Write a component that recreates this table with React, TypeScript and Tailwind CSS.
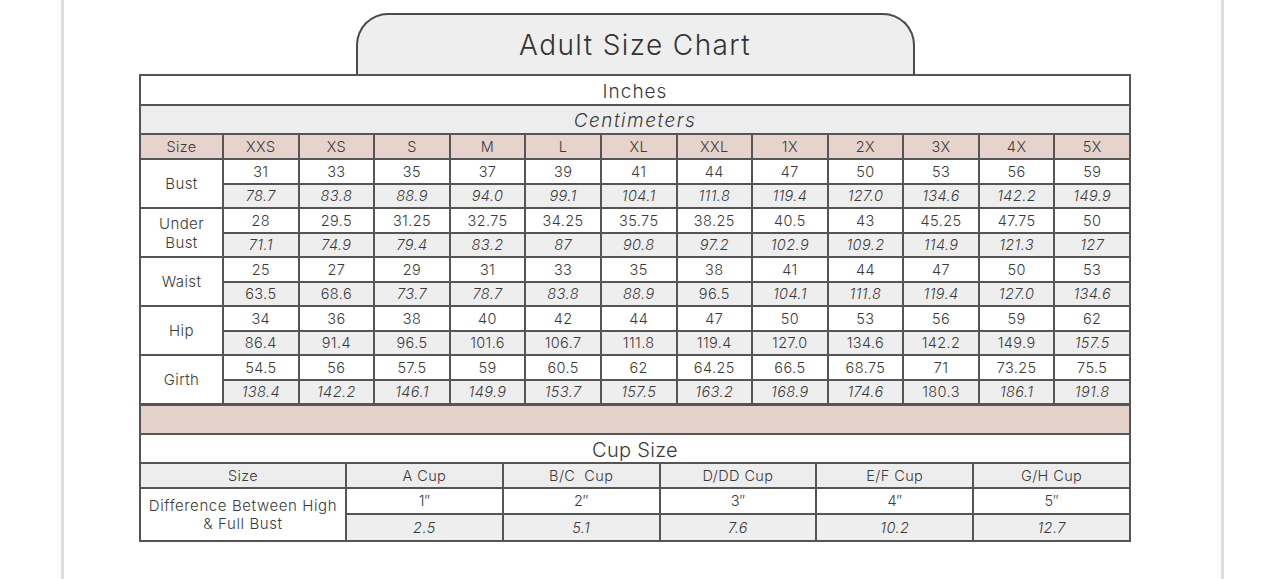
import React from "react";

const sizes = ["XXS", "XS", "S", "M", "L", "XL", "XXL", "1X", "2X", "3X", "4X", "5X"];

type Row = {
  label: string[];
  inches: string[];
  cm: string[];
  italic: number[];
};

const rows: Row[] = [
  {
    label: ["Bust"],
    inches: ["31", "33", "35", "37", "39", "41", "44", "47", "50", "53", "56", "59"],
    cm: ["78.7", "83.8", "88.9", "94.0", "99.1", "104.1", "111.8", "119.4", "127.0", "134.6", "142.2", "149.9"],
    italic: [1, 1, 1, 1, 1, 1, 1, 1, 1, 1, 1, 1],
  },
  {
    label: ["Under", "Bust"],
    inches: ["28", "29.5", "31.25", "32.75", "34.25", "35.75", "38.25", "40.5", "43", "45.25", "47.75", "50"],
    cm: ["71.1", "74.9", "79.4", "83.2", "87", "90.8", "97.2", "102.9", "109.2", "114.9", "121.3", "127"],
    italic: [1, 1, 1, 1, 1, 1, 1, 1, 1, 1, 1, 1],
  },
  {
    label: ["Waist"],
    inches: ["25", "27", "29", "31", "33", "35", "38", "41", "44", "47", "50", "53"],
    cm: ["63.5", "68.6", "73.7", "78.7", "83.8", "88.9", "96.5", "104.1", "111.8", "119.4", "127.0", "134.6"],
    italic: [0, 0, 1, 1, 1, 1, 0, 1, 1, 1, 1, 1],
  },
  {
    label: ["Hip"],
    inches: ["34", "36", "38", "40", "42", "44", "47", "50", "53", "56", "59", "62"],
    cm: ["86.4", "91.4", "96.5", "101.6", "106.7", "111.8", "119.4", "127.0", "134.6", "142.2", "149.9", "157.5"],
    italic: [0, 0, 0, 0, 0, 0, 0, 0, 0, 0, 0, 1],
  },
  {
    label: ["Girth"],
    inches: ["54.5", "56", "57.5", "59", "60.5", "62", "64.25", "66.5", "68.75", "71", "73.25", "75.5"],
    cm: ["138.4", "142.2", "146.1", "149.9", "153.7", "157.5", "163.2", "168.9", "174.6", "180.3", "186.1", "191.8"],
    italic: [1, 1, 1, 1, 1, 1, 1, 1, 1, 0, 1, 1],
  },
];

const cups = [
  { name: "A Cup", inch: "1\u2033", cm: "2.5" },
  { name: "B/C  Cup", inch: "2\u2033", cm: "5.1" },
  { name: "D/DD Cup", inch: "3\u2033", cm: "7.6" },
  { name: "E/F Cup", inch: "4\u2033", cm: "10.2" },
  { name: "G/H Cup", inch: "5\u2033", cm: "12.7" },
];

export default function App() {
  return (
    <div
      className="flex min-h-[579px] w-[1284px] bg-white text-[#3a3a3a]"
      style={{ fontFamily: "Inter, 'Noto Sans', sans-serif" }}
    >
      <div className="w-[61px] shrink-0" />
      <div className="w-[3px] shrink-0 bg-[#dedede]" />
      <div className="flex w-[1157px] shrink-0 flex-col pl-[75px] pt-[13px]">
        <div className="flex w-[992px] flex-col items-center">
          {/* Tab */}
          <div className="flex h-[61px] w-[559px] items-center justify-center rounded-t-[32px] border-2 border-b-0 border-[#4a4a4a] bg-[#efeeee] pt-[1px]">
            <span className="text-[28px] font-[350] tracking-[1.4px] text-[#333]">Adult Size Chart</span>
          </div>

          {/* Table */}
          <div className="flex w-[992px] flex-col gap-[2px] bg-[#555] p-[2px]">
            <div className="flex h-[28px] items-center justify-center bg-white pt-[4px] text-[19px] font-[350] tracking-[1px]">
              Inches
            </div>
            <div className="flex h-[27px] items-center justify-center bg-[#eeeded] pt-[4px] text-[19px] font-[350] italic tracking-[1.5px]">
              Centimeters
            </div>

            <div className="grid grid-cols-[81px_repeat(12,minmax(0,1fr))] gap-[2px] bg-[#555]">
              <div className="flex h-[23px] items-center justify-center bg-[#e6d3cc] pt-[1px] text-[14.5px] font-[350] tracking-[0.4px]">Size</div>
              {sizes.map((s) => (
                <div key={s} className="flex h-[23px] items-center justify-center bg-[#e6d3cc] pt-[1px] text-[14.5px] font-[350] tracking-[0.4px]">
                  {s}
                </div>
              ))}
              {rows.map((r) => (
                <React.Fragment key={r.label.join(" ")}>
                  <div className="row-span-2 flex flex-col items-center justify-center bg-white text-[15px] font-[350] leading-[19px] tracking-[0.4px]">
                    {r.label.map((l) => (
                      <span key={l}>{l}</span>
                    ))}
                  </div>
                  {r.inches.map((v, i) => (
                    <div key={"i" + i} className="flex h-[23px] items-center justify-center bg-white text-[14.5px] font-[350] tracking-[0.4px]">
                      {v}
                    </div>
                  ))}
                  {r.cm.map((v, i) => (
                    <div
                      key={"c" + i}
                      className={
                        r.italic[i]
                          ? "flex h-[22px] items-center justify-center bg-[#efeeee] text-[14.5px] font-[350] italic tracking-[0.4px]"
                          : "flex h-[22px] items-center justify-center bg-[#efeeee] text-[14.5px] font-[350] tracking-[0.4px]"
                      }
                    >
                      {v}
                    </div>
                  ))}
                </React.Fragment>
              ))}
            </div>

            <div className="mt-[1px] h-[27px] bg-[#e5d2cb]" />

            <div className="flex h-[27px] items-center justify-center bg-white pt-[3px] text-[20px] font-[350] tracking-[0.3px]">
              Cup Size
            </div>

            <div className="grid grid-cols-[204px_repeat(5,minmax(0,1fr))] gap-[2px] bg-[#555]">
              <div className="flex h-[23px] items-center justify-center bg-[#eeeded] pt-[1px] text-[14.5px] font-[350] tracking-[0.4px]">Size</div>
              {cups.map((c) => (
                <div key={c.name} className="flex h-[23px] items-center justify-center whitespace-pre bg-[#eeeded] pt-[1px] text-[14.5px] font-[350] tracking-[0.4px]">
                  {c.name}
                </div>
              ))}
              <div className="row-span-2 flex flex-col items-center justify-center bg-white pt-[1px] text-[15px] font-[350] leading-[18px] tracking-[0.6px]">
                <span>Difference Between High</span>
                <span>&amp; Full Bust</span>
              </div>
              {cups.map((c) => (
                <div key={"i" + c.name} className="flex h-[24px] items-center justify-center bg-white text-[14.5px] font-[350]">
                  {c.inch}
                </div>
              ))}
              {cups.map((c) => (
                <div key={"c" + c.name} className="flex h-[25px] items-center justify-center bg-[#efeeee] text-[14.5px] font-[350] italic tracking-[0.4px]">
                  {c.cm}
                </div>
              ))}
            </div>
          </div>
        </div>
      </div>
      <div className="w-[3px] shrink-0 bg-[#dedede]" />
      <div className="flex-1" />
    </div>
  );
}
